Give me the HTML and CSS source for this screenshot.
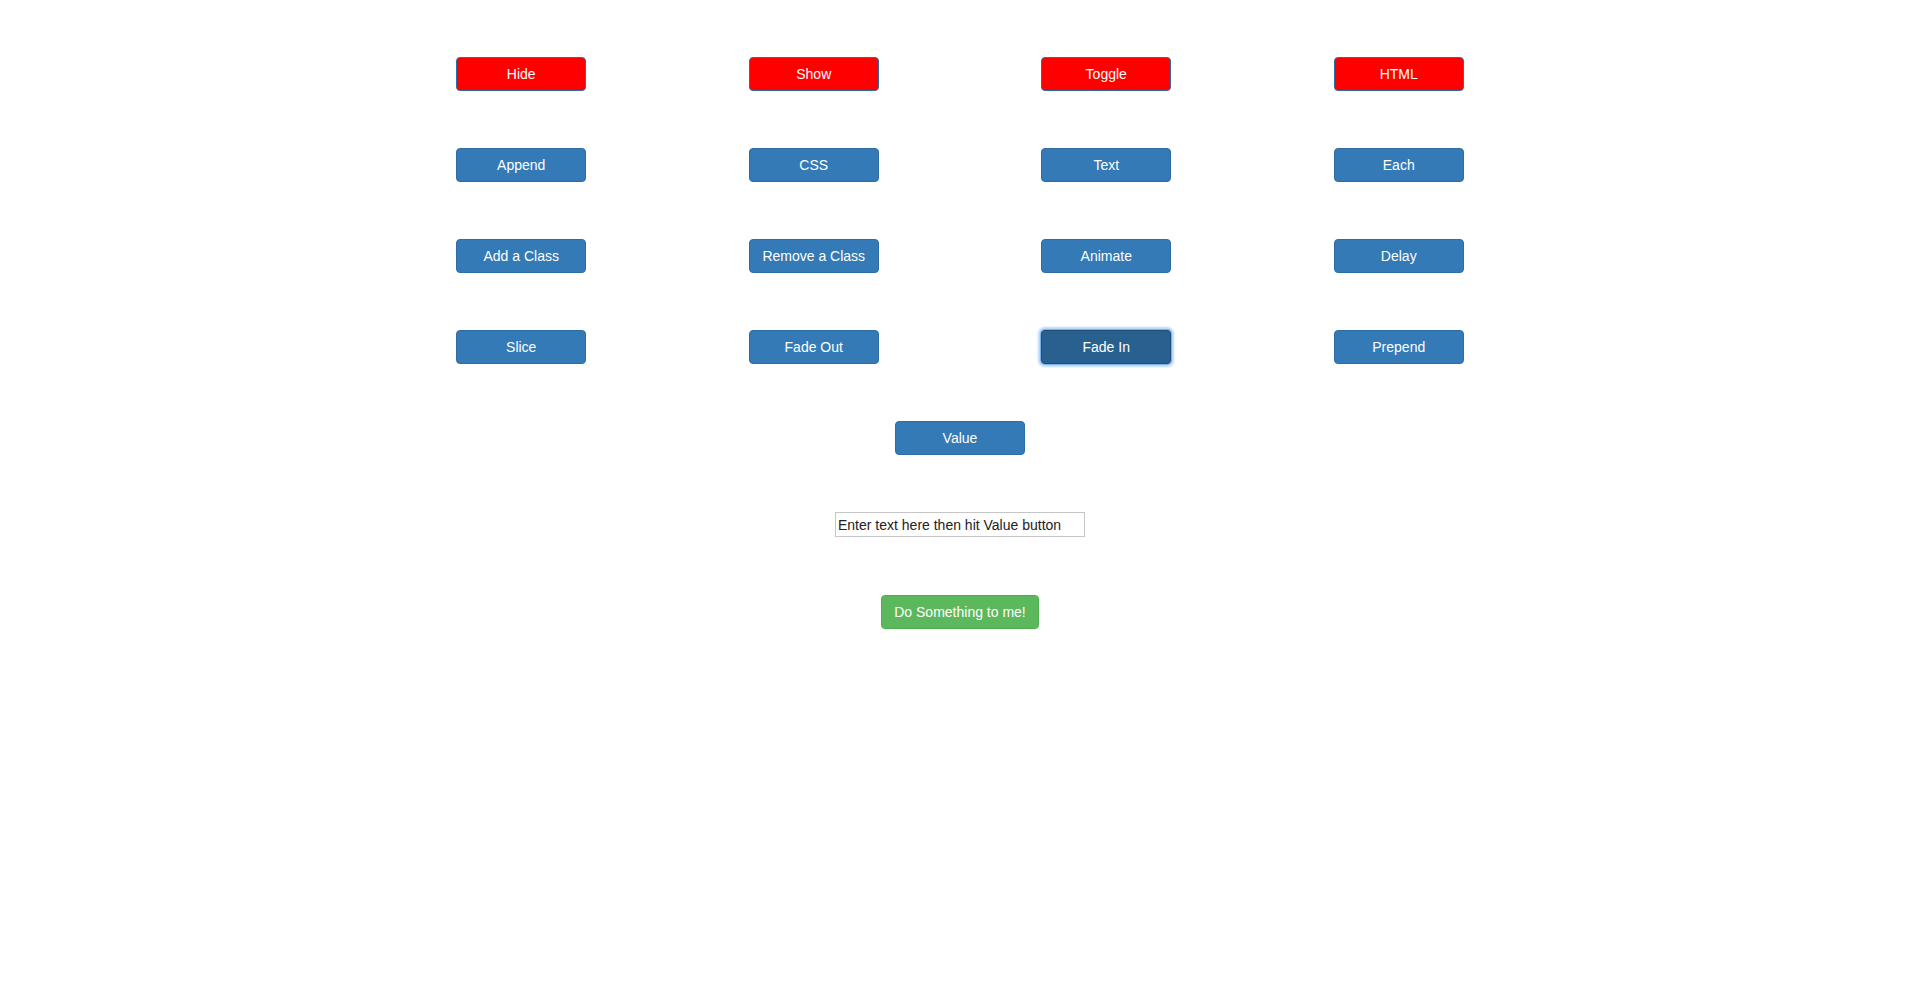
FILE: index.html
```html
<!DOCTYPE html>
<html>
<head>
<meta charset="utf-8">
<link rel="stylesheet" href="styles.css">
</head>
<body>
<div class="container">
  <div class="row">
    <div class="cell"><button class="btn btn-red">Hide</button></div>
    <div class="cell"><button class="btn btn-red">Show</button></div>
    <div class="cell"><button class="btn btn-red">Toggle</button></div>
    <div class="cell"><button class="btn btn-red">HTML</button></div>
  </div>
  <div class="row">
    <div class="cell"><button class="btn btn-blue">Append</button></div>
    <div class="cell"><button class="btn btn-blue">CSS</button></div>
    <div class="cell"><button class="btn btn-blue">Text</button></div>
    <div class="cell"><button class="btn btn-blue">Each</button></div>
  </div>
  <div class="row">
    <div class="cell"><button class="btn btn-blue">Add a Class</button></div>
    <div class="cell"><button class="btn btn-blue">Remove a Class</button></div>
    <div class="cell"><button class="btn btn-blue">Animate</button></div>
    <div class="cell"><button class="btn btn-blue">Delay</button></div>
  </div>
  <div class="row">
    <div class="cell"><button class="btn btn-blue">Slice</button></div>
    <div class="cell"><button class="btn btn-blue">Fade Out</button></div>
    <div class="cell"><button class="btn btn-blue btn-focus">Fade In</button></div>
    <div class="cell"><button class="btn btn-blue">Prepend</button></div>
  </div>
  <div class="center">
    <button class="btn btn-blue">Value</button>
  </div>
  <div class="center">
    <input class="text-input" type="text" value="Enter text here then hit Value button">
  </div>
  <div class="center center-last">
    <button class="btn btn-green">Do Something to me!</button>
  </div>
</div>
</body>
</html>
```
FILE: styles.css
```css
html, body {
  margin: 0;
  padding: 0;
  background: #fff;
}
body {
  font-family: "Liberation Sans", Arial, sans-serif;
  font-size: 14px;
  color: #333;
}
.container {
  width: 1170px;
  margin: 0 auto;
  padding-top: 57px;
  display: flex;
  flex-direction: column;
  gap: 57px;
}
.row {
  display: grid;
  grid-template-columns: repeat(4, 1fr);
}
.cell {
  display: flex;
  justify-content: center;
}
.center {
  display: flex;
  justify-content: center;
}
.center-last {
  margin-top: 1px;
}
.btn {
  box-sizing: border-box;
  width: 130px;
  height: 34px;
  padding: 6px 12px;
  font-family: "Liberation Sans", Arial, sans-serif;
  font-size: 14px;
  line-height: 20px;
  color: #fff;
  border: 1px solid #2e6da4;
  border-radius: 4px;
  text-align: center;
  cursor: pointer;
}
.btn-red {
  background: #ff0000;
}
.btn-blue {
  background: #337ab7;
}
.btn-focus {
  background: #286090;
  border-color: #204d74;
  box-shadow: 0 0 0 1px #7fb2ec, 0 0 2px 3px rgba(130, 180, 245, 0.55);
}
.btn-green {
  width: 158px;
  background: #5cb85c;
  border-color: #4cae4c;
}
.text-input {
  box-sizing: border-box;
  width: 250px;
  height: 25px;
  padding: 1px 2px;
  margin: 0;
  font-family: "Liberation Sans", Arial, sans-serif;
  font-size: 14px;
  color: #222;
  border: 1px solid #c6c6c6;
  border-radius: 0;
  outline: none;
}
```
